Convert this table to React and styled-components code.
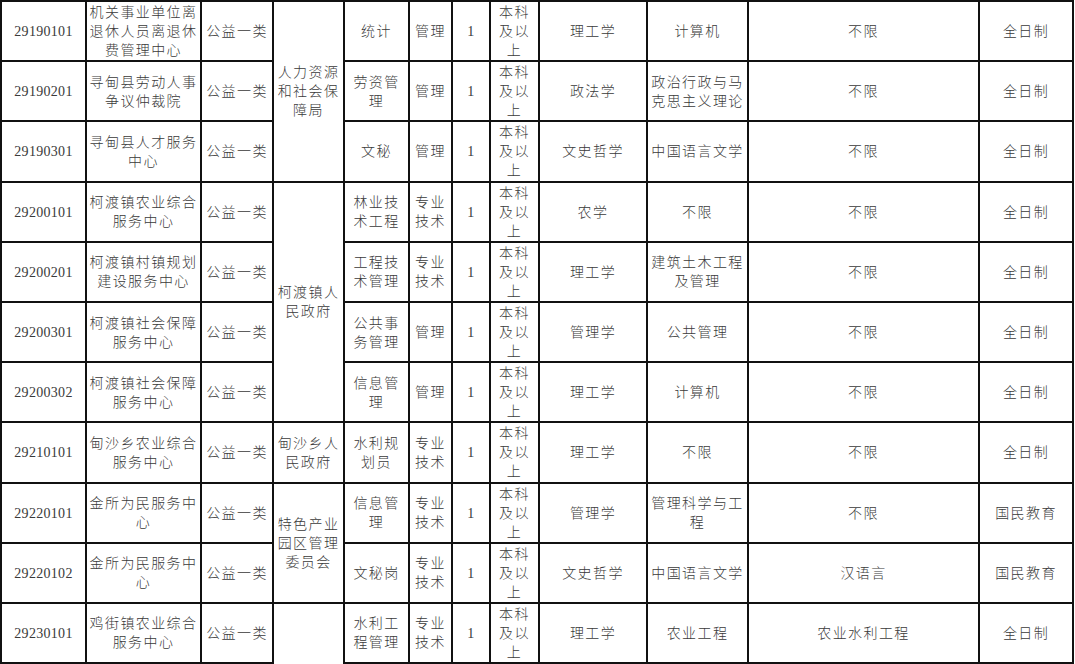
import styled, { createGlobalStyle } from "styled-components";

const GlobalStyle = createGlobalStyle`
  html, body {
    margin: 0;
    padding: 0;
    background: #ffffff;
  }
`;

const Page = styled.div`
  width: 1075px;
  height: 664px;
  overflow: hidden;
  background: #fff;
`;

const Table = styled.table`
  border-collapse: collapse;
  table-layout: fixed;
  width: 1073px;
  font-family: "Liberation Serif", "Noto Sans CJK SC", serif;
  font-size: 14px;
  font-weight: 300;
  color: #3a3a3a;
`;

const Row = styled.tr`
  height: 60.2px;
`;

const Cell = styled.td`
  border: 2px solid #111;
  border-bottom-style: ${(p) => (p.$open ? "none" : "solid")};
  padding: 1px 2px 0;
  text-align: center;
  vertical-align: middle;
  line-height: 19px;
  letter-spacing: ${(p) => (p.$code ? "0.3px" : "1.4px")};
  white-space: nowrap;
  overflow: hidden;
`;

const Line = styled.span`
  display: block;
`;

const widths = [85, 115, 72, 71, 65, 43, 38, 49, 108, 101, 231, 94];

const rows = [
  ["29190101", "机关事业单位离|退休人员离退休|费管理中心", "统计", "管理", "理工学", "计算机", "不限", "全日制"],
  ["29190201", "寻甸县劳动人事|争议仲裁院", "劳资管|理", "管理", "政法学", "政治行政与马|克思主义理论", "不限", "全日制"],
  ["29190301", "寻甸县人才服务|中心", "文秘", "管理", "文史哲学", "中国语言文学", "不限", "全日制"],
  ["29200101", "柯渡镇农业综合|服务中心", "林业技|术工程", "专业|技术", "农学", "不限", "不限", "全日制"],
  ["29200201", "柯渡镇村镇规划|建设服务中心", "工程技|术管理", "专业|技术", "理工学", "建筑土木工程|及管理", "不限", "全日制"],
  ["29200301", "柯渡镇社会保障|服务中心", "公共事|务管理", "管理", "管理学", "公共管理", "不限", "全日制"],
  ["29200302", "柯渡镇社会保障|服务中心", "信息管|理", "管理", "理工学", "计算机", "不限", "全日制"],
  ["29210101", "甸沙乡农业综合|服务中心", "水利规|划员", "专业|技术", "理工学", "不限", "不限", "全日制"],
  ["29220101", "金所为民服务中|心", "信息管|理", "专业|技术", "管理学", "管理科学与工|程", "不限", "国民教育"],
  ["29220102", "金所为民服务中|心", "文秘岗", "专业|技术", "文史哲学", "中国语言文学", "汉语言", "国民教育"],
  ["29230101", "鸡街镇农业综合|服务中心", "水利工|程管理", "专业|技术", "理工学", "农业工程", "农业水利工程", "全日制"],
];

// department cells, keyed by the row they start on
const departments = {
  0: { span: 3, text: "人力资源|和社会保|障局" },
  3: { span: 4, text: "柯渡镇人|民政府" },
  7: { span: 1, text: "甸沙乡人|民政府" },
  8: { span: 2, text: "特色产业|园区管理|委员会" },
  10: { span: 1, text: "", open: true },
};

function Text({ value }) {
  return value.split("|").map((line, i) => <Line key={i}>{line}</Line>);
}

export default function App() {
  return (
    <Page>
      <GlobalStyle />
      <Table>
        <colgroup>
          {widths.map((w, i) => (
            <col key={i} style={{ width: w }} />
          ))}
        </colgroup>
        <tbody>
          {rows.map((r, i) => {
            const [code, unit, post, kind, field, major, other, form] = r;
            const dept = departments[i];
            return (
              <Row key={code}>
                <Cell $code>{code}</Cell>
                <Cell>
                  <Text value={unit} />
                </Cell>
                <Cell>公益一类</Cell>
                {dept && (
                  <Cell rowSpan={dept.span} $open={dept.open}>
                    <Text value={dept.text} />
                  </Cell>
                )}
                <Cell>
                  <Text value={post} />
                </Cell>
                <Cell>
                  <Text value={kind} />
                </Cell>
                <Cell $code>1</Cell>
                <Cell>
                  <Text value="本科|及以|上" />
                </Cell>
                <Cell>{field}</Cell>
                <Cell>
                  <Text value={major} />
                </Cell>
                <Cell>{other}</Cell>
                <Cell>{form}</Cell>
              </Row>
            );
          })}
        </tbody>
      </Table>
    </Page>
  );
}
